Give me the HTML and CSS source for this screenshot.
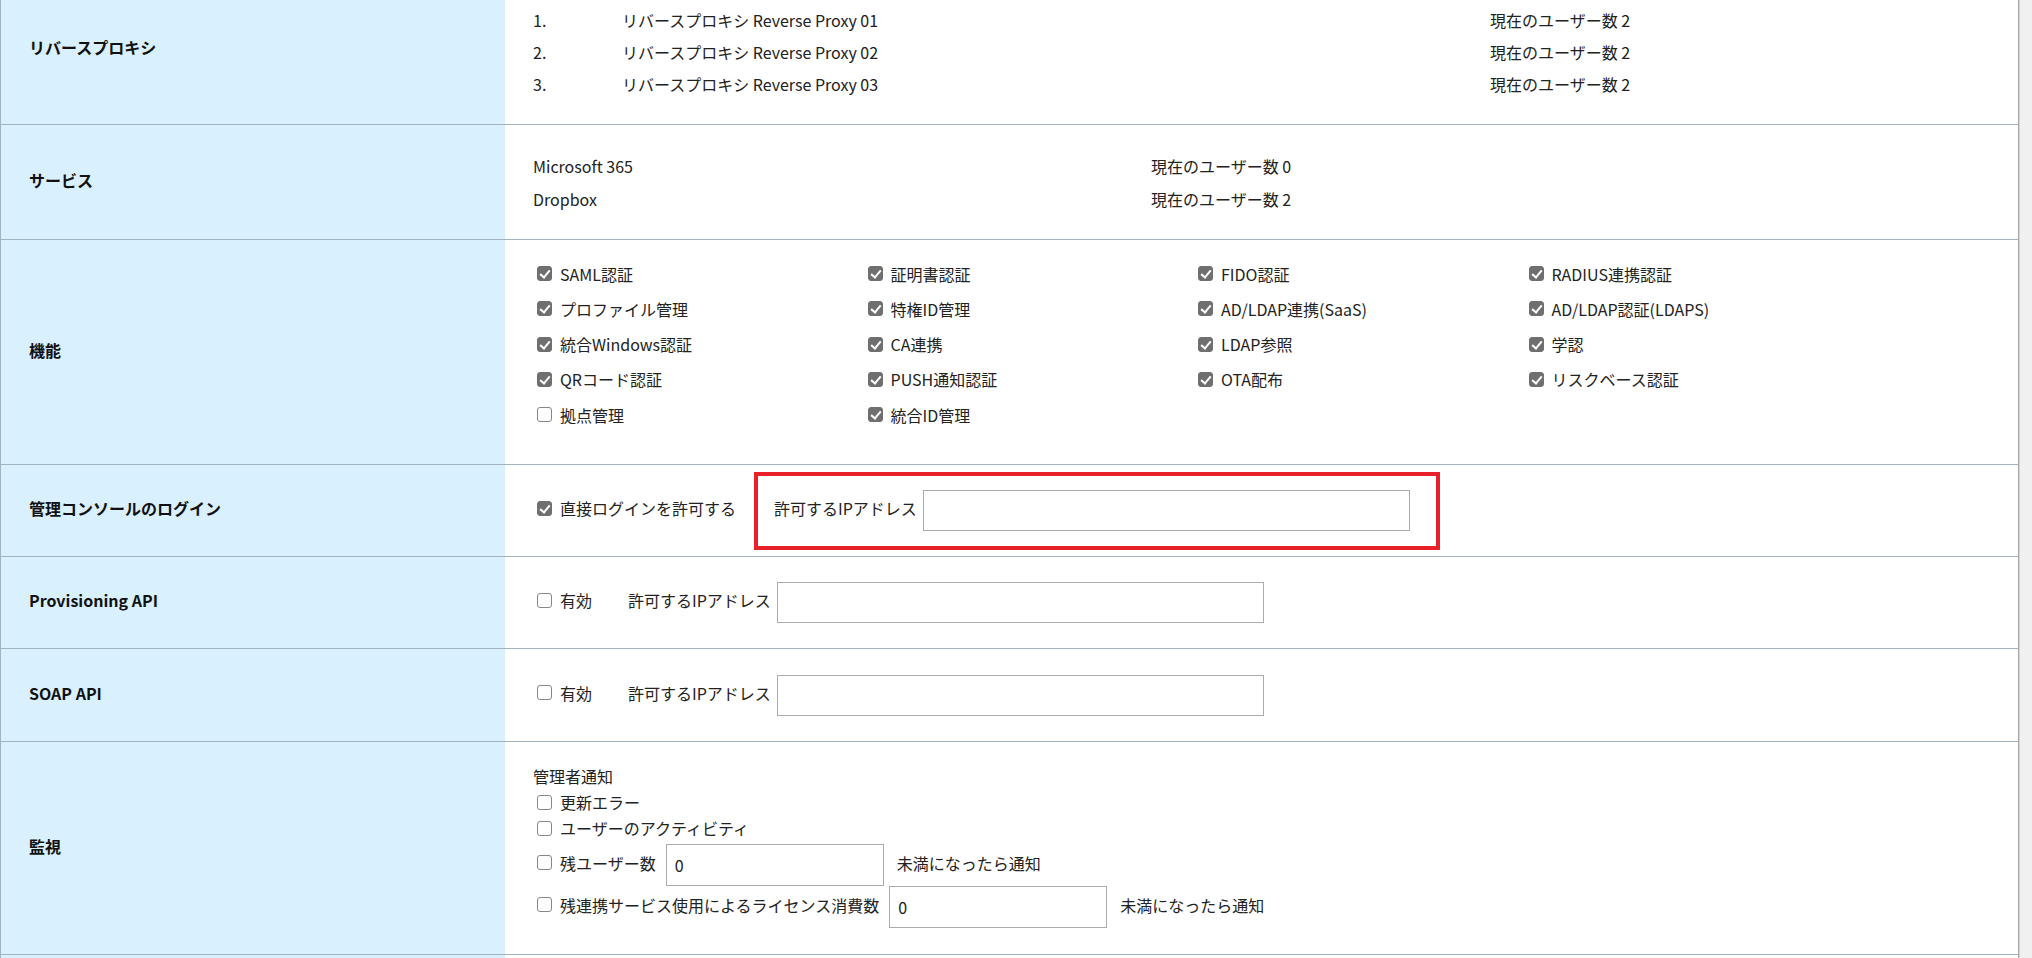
FILE: index.html
```html
<!DOCTYPE html>
<html lang="ja">
<head>
  <meta charset="utf-8">
  <title>テナント設定</title>
  <link rel="stylesheet" href="styles.css">
</head>
<body>
  <div class="settings">

    <div class="row row-proxy">
      <div class="row-label">リバースプロキシ</div>
      <div class="row-body proxy-list">
        <span>1.</span><span>リバースプロキシ Reverse Proxy 01</span><span>現在のユーザー数 2</span>
        <span>2.</span><span>リバースプロキシ Reverse Proxy 02</span><span>現在のユーザー数 2</span>
        <span>3.</span><span>リバースプロキシ Reverse Proxy 03</span><span>現在のユーザー数 2</span>
      </div>
    </div>

    <div class="row row-service">
      <div class="row-label">サービス</div>
      <div class="row-body service-list">
        <span>Microsoft 365</span><span>現在のユーザー数 0</span>
        <span>Dropbox</span><span>現在のユーザー数 2</span>
      </div>
    </div>

    <div class="row row-features">
      <div class="row-label">機能</div>
      <div class="row-body feature-grid">
        <label class="opt"><span class="check on"></span>SAML認証</label>
        <label class="opt"><span class="check on"></span>証明書認証</label>
        <label class="opt"><span class="check on"></span>FIDO認証</label>
        <label class="opt"><span class="check on"></span>RADIUS連携認証</label>
        <label class="opt"><span class="check on"></span>プロファイル管理</label>
        <label class="opt"><span class="check on"></span>特権ID管理</label>
        <label class="opt"><span class="check on"></span>AD/LDAP連携(SaaS)</label>
        <label class="opt"><span class="check on"></span>AD/LDAP認証(LDAPS)</label>
        <label class="opt"><span class="check on"></span>統合Windows認証</label>
        <label class="opt"><span class="check on"></span>CA連携</label>
        <label class="opt"><span class="check on"></span>LDAP参照</label>
        <label class="opt"><span class="check on"></span>学認</label>
        <label class="opt"><span class="check on"></span>QRコード認証</label>
        <label class="opt"><span class="check on"></span>PUSH通知認証</label>
        <label class="opt"><span class="check on"></span>OTA配布</label>
        <label class="opt"><span class="check on"></span>リスクベース認証</label>
        <label class="opt"><span class="check"></span>拠点管理</label>
        <label class="opt"><span class="check on"></span>統合ID管理</label>
      </div>
    </div>

    <div class="row row-login">
      <div class="row-label">管理コンソールのログイン</div>
      <div class="row-body inline-body">
        <label class="opt"><span class="check on"></span>直接ログインを許可する</label>
        <div class="highlight">
          <span class="ip-label">許可するIPアドレス</span>
          <input type="text" class="ip-input">
        </div>
      </div>
    </div>

    <div class="row row-api">
      <div class="row-label">Provisioning API</div>
      <div class="row-body inline-body">
        <label class="opt opt-enable"><span class="check"></span>有効</label>
        <span class="ip-label">許可するIPアドレス</span>
        <input type="text" class="ip-input">
      </div>
    </div>

    <div class="row row-soap">
      <div class="row-label">SOAP API</div>
      <div class="row-body inline-body">
        <label class="opt opt-enable"><span class="check"></span>有効</label>
        <span class="ip-label">許可するIPアドレス</span>
        <input type="text" class="ip-input">
      </div>
    </div>

    <div class="row row-monitor">
      <div class="row-label">監視</div>
      <div class="row-body monitor">
        <div class="monitor-title">管理者通知</div>
        <label class="opt"><span class="check"></span>更新エラー</label>
        <label class="opt"><span class="check"></span>ユーザーのアクティビティ</label>
        <div class="notify-row first">
          <label class="opt"><span class="check"></span>残ユーザー数</label>
          <input type="text" class="num-input" value="0">
          <span class="notify-text">未満になったら通知</span>
        </div>
        <div class="notify-row">
          <label class="opt"><span class="check"></span>残連携サービス使用によるライセンス消費数</label>
          <input type="text" class="num-input" value="0">
          <span class="notify-text">未満になったら通知</span>
        </div>
      </div>
    </div>

    <div class="row row-next">
      <div class="row-label"></div>
      <div class="row-body"></div>
    </div>

  </div>
</body>
</html>
```

FILE: styles.css
```css
* {
  box-sizing: border-box;
}

html, body {
  margin: 0;
}

body {
  background: #f0f0f0;
  font-family: "Noto Sans CJK JP", "Noto Sans", sans-serif;
  font-size: 16px;
  color: #222;
  overflow: hidden;
}

.settings {
  width: 2019px;
  margin-top: -26px;
  background: #fff;
  border-left: 1px solid #a3b4c1;
  border-right: 1px solid #a8a8a8;
  box-shadow: 1px 0 0 #d4d4d4;
}

.row {
  display: grid;
  grid-template-columns: 504px 1fr;
  border-bottom: 1px solid #a3b4c1;
}

.row-label {
  background: #d9f0fe;
  display: flex;
  align-items: center;
  padding: 0 0 5px 28px;
  font-weight: bold;
  color: #111;
}

.row-body {
  padding: 0 28px;
}

.row-proxy { height: 151px; }
.row-service { height: 115px; }
.row-features { height: 225px; }
.row-login { height: 92px; }
.row-api { height: 92px; }
.row-soap { height: 93px; }
.row-monitor { height: 213px; }
.row-next { height: 40px; border-bottom: none; }

.proxy-list {
  display: grid;
  grid-template-columns: 89px 868px auto;
  align-content: start;
  padding-top: 30px;
  line-height: 32px;
}

.service-list {
  display: grid;
  grid-template-columns: 618px auto;
  align-content: start;
  padding-top: 25px;
  line-height: 33px;
}

.feature-grid {
  display: grid;
  grid-template-columns: repeat(4, 330.5px);
  grid-auto-rows: 35.25px;
  align-content: start;
  align-items: center;
  padding-top: 16px;
}

/* checkbox look-alike */
.opt {
  display: flex;
  align-items: center;
  white-space: nowrap;
}

.check {
  position: relative;
  flex: none;
  width: 15px;
  height: 15px;
  margin: 0 8px 0 4px;
  background: #fff;
  border: 1px solid #878787;
  border-radius: 3px;
}

.check.on {
  background: #6f6f6f;
  border-color: #6f6f6f;
}

.check.on::after {
  content: "";
  position: absolute;
  left: 4px;
  top: 1px;
  width: 4px;
  height: 8px;
  border: solid #fff;
  border-width: 0 2px 2px 0;
  transform: rotate(40deg);
}

.inline-body {
  display: flex;
  align-items: center;
}

.inline-body .opt,
.inline-body .ip-label,
.notify-row .opt,
.notify-text {
  padding-bottom: 5px;
}

.highlight {
  display: flex;
  align-items: center;
  margin-left: 18px;
  padding: 14px 26px 15px 16px;
  border: 4px solid #e8202a;
}

.ip-label {
  margin-right: 6px;
  white-space: nowrap;
}

.ip-input {
  width: 487px;
  height: 41px;
  border: 1px solid #ababab;
  background: #fff;
  font: inherit;
  padding: 0 8px;
}

.opt-enable {
  margin-right: 36px;
}

.monitor {
  padding-top: 21px;
  line-height: 26px;
}

.notify-row {
  display: flex;
  align-items: center;
  height: 42px;
}

.notify-row.first {
  margin-top: 3px;
}

.num-input {
  width: 218px;
  height: 42px;
  margin: 0 13px 0 10px;
  border: 1px solid #ababab;
  background: #fff;
  font: inherit;
  color: #222;
  padding: 0 8px;
}
```
